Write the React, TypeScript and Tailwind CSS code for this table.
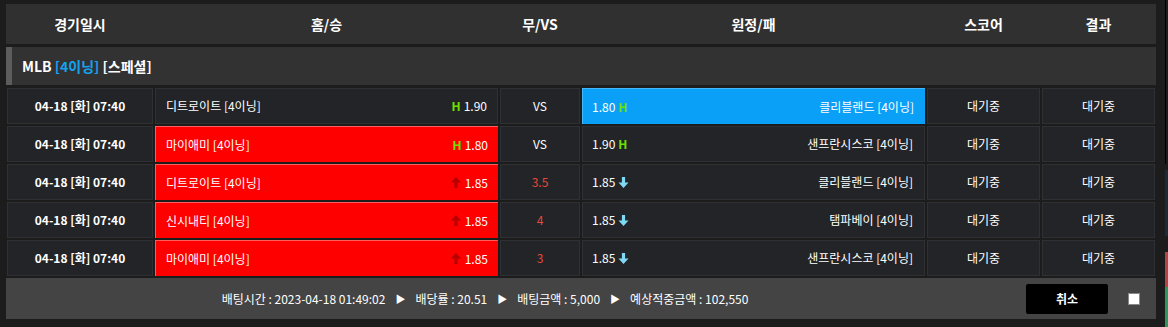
import React from "react";

type Mark = "H" | "up" | "down" | null;

interface BetRow {
  home: string;
  homeOdds: string;
  homeMark: Mark;
  homeSel?: boolean;
  mid: string;
  midRed?: boolean;
  away: string;
  awayOdds: string;
  awayMark: Mark;
  awaySel?: boolean;
}

const ROWS: BetRow[] = [
  { home: "디트로이트 [4이닝]", homeOdds: "1.90", homeMark: "H", mid: "VS", away: "클리블랜드 [4이닝]", awayOdds: "1.80", awayMark: "H", awaySel: true },
  { home: "마이애미 [4이닝]", homeOdds: "1.80", homeMark: "H", homeSel: true, mid: "VS", away: "샌프란시스코 [4이닝]", awayOdds: "1.90", awayMark: "H" },
  { home: "디트로이트 [4이닝]", homeOdds: "1.85", homeMark: "up", homeSel: true, mid: "3.5", midRed: true, away: "클리블랜드 [4이닝]", awayOdds: "1.85", awayMark: "down" },
  { home: "신시내티 [4이닝]", homeOdds: "1.85", homeMark: "up", homeSel: true, mid: "4", midRed: true, away: "탬파베이 [4이닝]", awayOdds: "1.85", awayMark: "down" },
  { home: "마이애미 [4이닝]", homeOdds: "1.85", homeMark: "up", homeSel: true, mid: "3", midRed: true, away: "샌프란시스코 [4이닝]", awayOdds: "1.85", awayMark: "down" },
];

const FONT = "font-['Malgun_Gothic','Noto_Sans_CJK_KR','Noto_Sans',sans-serif]";
const GRID = "grid grid-cols-[146px_343px_80px_343px_113px_113px] gap-x-[2px]";
const DARK = "bg-[#232427] border border-[#2f3033]";

function MarkIcon({ mark }: { mark: Mark }) {
  if (mark === "H") return <span className="font-bold text-[#6fe000]">H</span>;
  if (mark === "up")
    return (
      <svg width="10" height="11" viewBox="0 0 10 11" className="mr-[1px]">
        <path d="M5 0 L10 5.5 L6.6 5.5 L6.6 11 L3.4 11 L3.4 5.5 L0 5.5 Z" fill="#b80000" />
      </svg>
    );
  if (mark === "down")
    return (
      <svg width="11" height="11" viewBox="0 0 10 11">
        <path d="M5 11 L10 5.5 L6.6 5.5 L6.6 0 L3.4 0 L3.4 5.5 L0 5.5 Z" fill="#7fd9f3" />
      </svg>
    );
  return null;
}

export default function App() {
  return (
    <div className={`w-[1168px] h-[327px] bg-[#1c1c1c] flex text-white overflow-hidden ${FONT}`}>
      <div className="w-[1156px] pl-[6px] pt-[4px] flex flex-col">
        {/* header */}
        <div className={`${GRID} h-[40px] bg-[#303030] px-[1px] items-center text-[14px] font-bold`}>
          <div className="text-center">경기일시</div>
          <div className="text-center">홈/승</div>
          <div className="text-center">무/VS</div>
          <div className="text-center">원정/패</div>
          <div className="text-center">스코어</div>
          <div className="text-center">결과</div>
        </div>

        {/* league */}
        <div className="mt-[3px] h-[38px] bg-[#323232] flex items-center">
          <div className="w-[6px] h-full bg-[#5c5c5c]" />
          <div className="pl-[10px] text-[14px] font-bold">
            MLB <span className="text-[#14a4ef]">[4이닝]</span> [스페셜]
          </div>
        </div>

        {/* rows */}
        <div className="mt-[3px] pl-[1px] flex flex-col gap-y-[2px]">
          {ROWS.map((r, i) => (
            <div key={i} className={`${GRID} h-[36px] text-[12px]`}>
              <div className={`${DARK} flex items-center justify-center font-bold`}>04-18 [화] 07:40</div>
              <div
                className={
                  "flex items-center justify-between pl-[10px] pr-[10px] " +
                  (r.homeSel ? "bg-[#ff0000] border-t border-l border-[#ff5c5c]" : DARK)
                }
              >
                <span>{r.home}</span>
                <span className="flex items-center gap-[3px]">
                  <MarkIcon mark={r.homeMark} />
                  <span>{r.homeOdds}</span>
                </span>
              </div>
              <div className={`${DARK} flex items-center justify-center ${r.midRed ? "text-[#e8473a]" : ""}`}>
                {r.mid}
              </div>
              <div
                className={
                  "flex items-center justify-between pl-[9px] pr-[11px] " +
                  (r.awaySel ? "bg-[#0aa0f7] border-t border-l border-[#45b8fa]" : DARK)
                }
              >
                <span className="flex items-center gap-[3px]">
                  <span>{r.awayOdds}</span>
                  <MarkIcon mark={r.awayMark} />
                </span>
                <span>{r.away}</span>
              </div>
              <div className={`${DARK} flex items-center justify-center`}>대기중</div>
              <div className={`${DARK} flex items-center justify-center`}>대기중</div>
            </div>
          ))}
        </div>

        {/* footer */}
        <div className="mt-[2px] h-[41px] w-[1150px] bg-[#444444] flex items-center text-[12px]">
          <div className="flex-1 flex justify-center pr-[62px] items-center gap-[10px]">
            <span>배팅시간 : 2023-04-18 01:49:02</span>
            <span className="text-[10px]">▶</span>
            <span>배당률 : 20.51</span>
            <span className="text-[10px]">▶</span>
            <span>배팅금액 : 5,000</span>
            <span className="text-[10px]">▶</span>
            <span>예상적중금액 : 102,550</span>
          </div>
          <button className="w-[82px] h-[30px] bg-black rounded-[2px] font-bold text-[12px]">취소</button>
          <div className="ml-[20px] mr-[16px] w-[12px] h-[12px] bg-white border border-[#888]" />
        </div>
      </div>

      {/* neighbouring panel edge */}
      <div className="ml-[9px] w-[3px] flex flex-col">
        <div className="h-[164px] border-l border-black" />
        <div className="mt-[6px] h-[66px] bg-[#1f2a38]" />
        <div className="mt-[16px] h-[35px] bg-[#b74444]" />
        <div className="h-[40px] bg-[#2a9a5c]" />
      </div>
    </div>
  );
}
